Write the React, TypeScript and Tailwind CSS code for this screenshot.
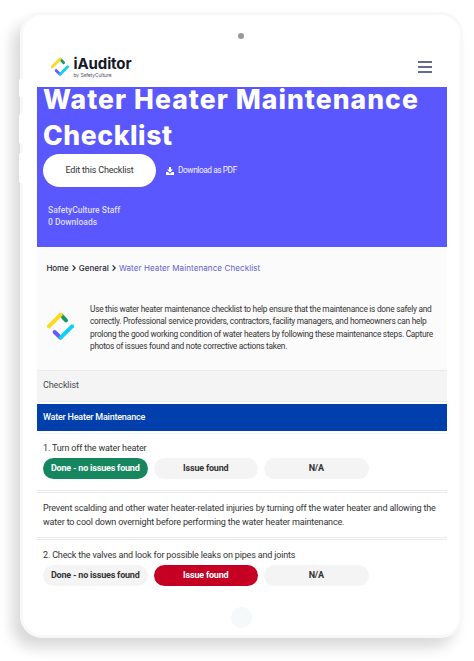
import { ReactNode } from "react";

type Answer = "done" | "issue" | "na";

interface Question { number: number; title: string; selected?: Answer; }

const ANSWERS: { id: Answer; label: string; active: string }[] = [
  { id: "done", label: "Done - no issues found", active: "bg-[#16865f] text-white" },
  { id: "issue", label: "Issue found", active: "bg-[#c60022] text-white" },
  { id: "na", label: "N/A", active: "bg-gray-600 text-white" },
];

function Logo({ className }: { className?: string }) {
  return (
    <svg viewBox="0 0 81 84" className={className} fill="none" strokeWidth="12" strokeLinecap="round">
      <path d="M42 9 57 25" stroke="#129a62" />
      <path d="M6 43 41 8" stroke="#ffd91a" />
      <path d="M40 77 23 60" stroke="#6559ff" />
      <path d="M75 43 41 77" stroke="#10d0f2" />
    </svg>
  );
}

function Chevron() {
  return <svg viewBox="0 0 4 6" className="w-1 h-1.5 mx-[3px]" fill="none" stroke="#1f2533" strokeWidth="1.2"><path d="M.6.4 3.2 3 .6 5.6" /></svg>;
}

function DownloadIcon() {
  return (
    <svg viewBox="0 0 16 16" className="w-2 h-2" fill="white">
      <path d="M6 0h4v5h4L8 11 2 5h4z" />
      <path d="M0 10h4l4 3.500L12 10h4v6H0z" />
    </svg>
  );
}

function Divider() {
  return <div className="h-[3px] border-y border-[#ececec]" />;
}

function QuestionRow({ question }: { question: Question }) {
  return (
    <div className="pl-[6px]">
      <p className="text-[9px] leading-3 tracking-[-0.17px] text-[#333]">{question.number}. {question.title}</p>
      <div className="flex gap-[6px] mt-1">
        {ANSWERS.map((a) => (
          <div key={a.id} className={`w-[104.500px] h-[21px] rounded-full flex items-center justify-center text-[9px] font-bold tracking-[-0.2px] ${question.selected === a.id ? a.active : "bg-[#f4f4f4] text-[#333]"}`}>{a.label}</div>
        ))}
      </div>
    </div>
  );
}

function Tablet({ children }: { children: ReactNode }) {
  return (
    <div className="relative w-[443px] h-[626px] rounded-[22px] border-3 border-[#f8f8f8] bg-white shadow-[-8px_10px_14px_rgba(0,0,0,0.15)]">
      <div className="absolute -left-1 top-[64px] w-1 h-[18px] rounded-l-xs bg-white" />
      <div className="absolute -left-1 top-[99px] w-1 h-[30px] rounded-l-xs bg-white" />
      <div className="absolute -left-1 top-[138px] w-1 h-[30px] rounded-l-xs bg-white" />
      <div className="absolute left-[215px] top-[18px] w-[6px] h-[6px] rounded-full bg-[#999]" />
      {children}
      <div className="w-[21px] h-[21px] rounded-full bg-[#f5f9f9] mt-[21px] ml-[208px]" />
    </div>
  );
}

export default function App() {
  return (
    <div className="w-[474px] h-[661px] overflow-hidden bg-white pl-5 pt-[12px] font-[Roboto,sans-serif]">
      <Tablet>
        <div className="ml-[14px] w-[410px] pt-[34px]">
          <header className="h-[38px] flex items-start justify-between pl-[14px] pr-[15px] pt-2">
            <div className="flex items-start">
              <Logo className="w-[18px] h-[19px]" />
              <div className="ml-[4.500px] -mt-[2px] font-[Inter,sans-serif]">
                <div className="text-[15px] leading-[18px] font-bold tracking-[-0.1px] text-[#14182b]">iAuditor</div>
                <div className="text-[5px] leading-[5px] tracking-[-0.1px] text-[#545866]">by SafetyCulture</div>
              </div>
            </div>
            <div className="w-[14px] mt-1 flex flex-col gap-[3px]">
              <div className="h-[2px] bg-[#636c8c]" />
              <div className="h-[2px] bg-[#636c8c]" />
              <div className="h-[2px] bg-[#636c8c]" />
            </div>
          </header>

          <section className="h-[160px] mt-px bg-[#5a57ff] pl-[6px] text-white">
            <h1 className="font-[Inter,sans-serif] text-[26.500px] leading-9 font-extrabold whitespace-nowrap -mt-px -translate-y-[6px]"><span className="tracking-[1.05px]">Water Heater Maintenance</span><br /><span className="tracking-[0.6px]">Checklist</span></h1>
            <div className="flex items-center -mt-[5px]">
              <div className="w-[113px] h-[33px] rounded-full bg-white flex items-center justify-center text-[9px] tracking-[-0.17px] text-[#333]">Edit this Checklist</div>
              <div className="flex items-center gap-[4px] ml-[10px] text-[8.300px] tracking-[-0.42px] text-[#f1f0ff]"><DownloadIcon /><span>Download as PDF</span></div>
            </div>
            <div className="mt-[17px] ml-[5px] text-[8.500px] leading-3 font-medium text-[#deddff]">
              <p>SafetyCulture Staff</p>
              <p>0 Downloads</p>
            </div>
          </section>

          <section className="h-[123px] bg-[#fbfbfb] pt-[15px]">
            <nav className="flex items-center pl-[9.500px] font-[Inter,sans-serif] text-[8px] leading-3 font-medium text-[#1f2533]">
              <span className="tracking-[-0.1px]">Home</span><Chevron /><span className="tracking-[0.05px]">General</span><Chevron /><span className="text-[#5f5bd0] font-normal tracking-[0.1px]">Water Heater Maintenance Checklist</span>
            </nav>
            <div className="flex pl-[10px] mt-[29px]">
              <Logo className="w-[27px] h-[28px] mt-[9px] shrink-0" />
              <p className="ml-[16px] text-[8.300px] leading-[12.300px] tracking-[-0.25px] whitespace-nowrap text-[#333]">
                Use this water heater maintenance checklist to help ensure that the maintenance is done safely and<br />
                correctly. Professional service providers, contractors, facility managers, and homeowners can help<br />
                prolong the good working condition of water heaters by following these maintenance steps. Capture<br />
                photos of issues found and note corrective actions taken.
              </p>
            </div>
          </section>

          <div className="h-8 border-y border-[#ebebeb] bg-[#f4f4f4] flex items-center pl-[6px] text-[9px] tracking-[-0.1px] text-[#4b4b4b]">Checklist</div>
          <div className="mt-[2px] h-[27px] bg-[#003fac] flex items-center pl-[6px] text-[9px] font-medium tracking-[-0.22px] text-white">Water Heater Maintenance</div>
          <div className="mt-[2px] mb-2 h-px bg-[#f6f6f6]" />

          <QuestionRow question={{ number: 1, title: "Turn off the water heater", selected: "done" }} />
          <div className="mt-[11px]"><Divider /></div>
          <p className="pl-[6px] mt-[8px] mb-[8px] text-[9px] leading-[14px] tracking-[-0.17px] whitespace-nowrap text-[#333]">
            Prevent scalding and other water heater-related injuries by turning off the water heater and allowing the<br />
            water to cool down overnight before performing the water heater maintenance.
          </p>
          <Divider />
          <div className="mt-[9px]"><QuestionRow question={{ number: 2, title: "Check the valves and look for possible leaks on pipes and joints", selected: "issue" }} /></div>
        </div>
      </Tablet>
    </div>
  );
}
